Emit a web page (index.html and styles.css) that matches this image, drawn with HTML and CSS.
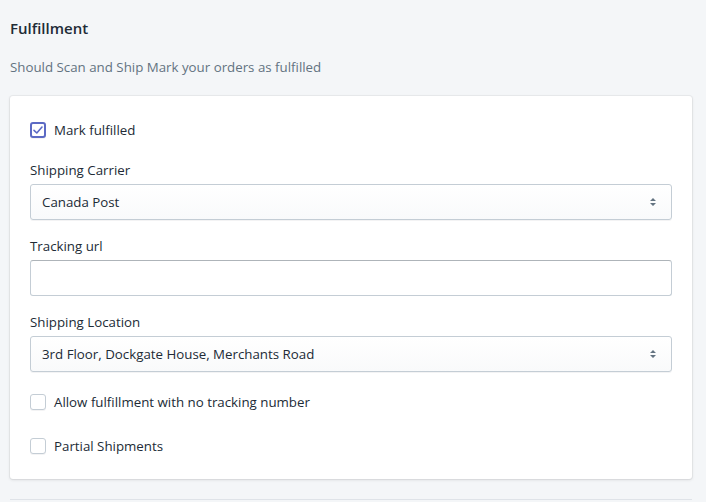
FILE: index.html
```html
<!DOCTYPE html>
<html lang="en">
<head>
    <meta charset="UTF-8">
    <title>Fulfillment</title>
    <link rel="stylesheet" href="styles.css">
</head>
<body>
    <div class="page">
        <div class="section-title">Fulfillment</div>
        <div class="section-desc">Should Scan and Ship Mark your orders as fulfilled</div>

        <div class="card">
            <!-- Mark fulfilled -->
            <label class="check-row">
                <span class="checkbox checked">
                    <svg width="12" height="12" viewBox="0 0 12 12"><path d="M2 6.3 L4.8 9 L10 3" fill="none" stroke="#5c6ac4" stroke-width="1.6" stroke-linecap="round" stroke-linejoin="round"/></svg>
                </span>
                Mark fulfilled
            </label>

            <div class="field">
                <div class="field-label">Shipping Carrier</div>
                <div class="select">
                    <span>Canada Post</span>
                    <svg class="arrows" width="8" height="10" viewBox="0 0 8 10"><path d="M4 1 L7 4 H1 Z M4 9 L7 6 H1 Z" fill="#637381"/></svg>
                </div>
            </div>

            <div class="field">
                <div class="field-label">Tracking url</div>
                <div class="text-input"></div>
            </div>

            <div class="field">
                <div class="field-label">Shipping Location</div>
                <div class="select">
                    <span>3rd Floor, Dockgate House, Merchants Road</span>
                    <svg class="arrows" width="8" height="10" viewBox="0 0 8 10"><path d="M4 1 L7 4 H1 Z M4 9 L7 6 H1 Z" fill="#637381"/></svg>
                </div>
            </div>

            <label class="check-row check-allow">
                <span class="checkbox"></span>
                Allow fulfillment with no tracking number
            </label>

            <label class="check-row check-partial">
                <span class="checkbox"></span>
                Partial Shipments
            </label>
        </div>

        <div class="divider"></div>
    </div>
</body>
</html>
```

FILE: styles.css
```css
body {
    margin: 0;
    background-color: #f4f6f8;
    font-family: "Open Sans", "Noto Sans", sans-serif;
    font-size: 13.3px;
    line-height: 20px;
    color: #212b36;
}

.page {
    width: 682px;
    padding: 18px 0 0 10px;
}

.section-title {
    font-size: 15px;
    font-weight: 600;
    line-height: 20px;
}

.section-desc {
    margin-top: 19px;
    color: #637381;
}

.card {
    margin-top: 19px;
    background-color: #fff;
    border-radius: 3px;
    box-shadow: 0 0 0 1px rgba(63, 63, 68, 0.05), 0 1px 3px 0 rgba(63, 63, 68, 0.15);
    padding: 24px 20px 23px;
}

.check-row {
    display: flex;
    align-items: center;
    gap: 8px;
    cursor: pointer;
}

.checkbox {
    width: 16px;
    height: 16px;
    box-sizing: border-box;
    border: 1px solid #c4cdd5;
    border-radius: 3px;
    background-color: #fff;
    display: flex;
    align-items: center;
    justify-content: center;
    box-shadow: 0 1px 0 rgba(22, 29, 37, 0.05);
}

.checkbox.checked {
    border: 2px solid #5c6ac4;
}

.field {
    margin-top: 16px;
}

.check-row + .field {
    margin-top: 20px;
}

.field-label {
    margin-bottom: 4px;
}

.select, .text-input {
    height: 36px;
    box-sizing: border-box;
    border: 1px solid #c4cdd5;
    border-radius: 3px;
}

.select {
    display: flex;
    align-items: center;
    justify-content: space-between;
    padding: 0 14px 0 11px;
    background: linear-gradient(to bottom, #fff, #f9fafb);
    box-shadow: 0 1px 0 0 rgba(22, 29, 37, 0.05);
}

.text-input {
    background-color: #fff;
    border-top-color: #aeb4b9;
}

.check-allow {
    margin-top: 20px;
}

.check-partial {
    margin-top: 24px;
}

.divider {
    margin-top: 20px;
    border-top: 1px solid #dfe3e8;
}
```
